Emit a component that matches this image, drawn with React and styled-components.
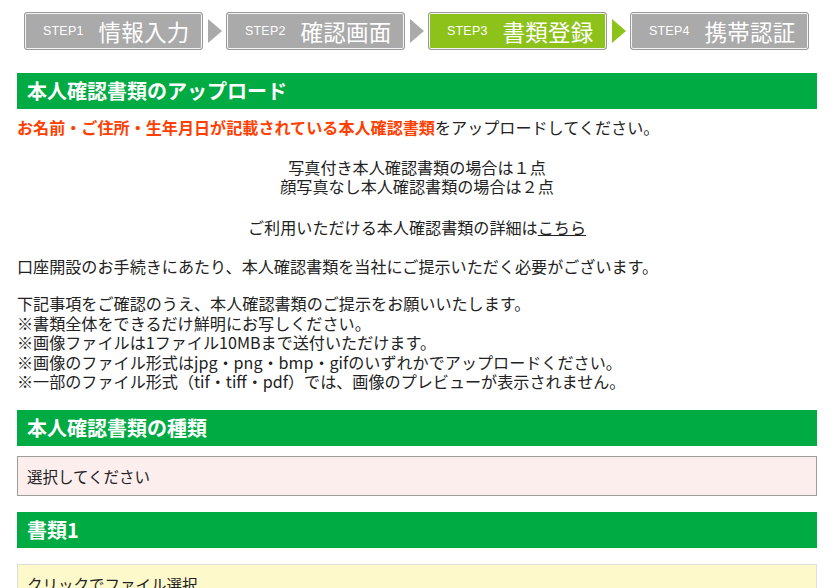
import styled, { createGlobalStyle } from "styled-components";

const GlobalStyle = createGlobalStyle`
    html, body {
        margin: 0;
        padding: 0;
        background: #fff;
    }
    body {
        font-family: "Noto Sans CJK JP", "Noto Sans", sans-serif;
        color: #222;
    }
`

const Page = styled.div`
    width: 800px;
    padding: 12px 17px 0;
`

const StepBar = styled.div`
    display: flex;
    align-items: center;
    padding-left: 7px;
    gap: 3.5px;
`

const StepBox = styled.div`
    width: 179px;
    height: 38px;
    flex: none;
    box-sizing: border-box;
    border: 1px solid #999;
    border-radius: 3px;
    box-shadow: inset 0 0 0 1px #f4f4f4;
    background: ${props => props.active ? "#8cc21a" : "#aaaaaa"};
    display: flex;
    align-items: center;
    padding-left: 18px;
    color: #fff;
    >small {
        font-family: "Liberation Sans", Arial, sans-serif;
        font-size: 12.5px;
        margin-right: 15px;
        letter-spacing: 0.2px;
    }
    >span {
        font-size: 22.5px;
        letter-spacing: 0.2px;
        line-height: 1;
    }
`

const Arrow = styled.div`
    width: 0;
    height: 0;
    flex: none;
    border-top: 12px solid transparent;
    border-bottom: 12px solid transparent;
    border-left: 14px solid ${props => props.active ? "#8cc21a" : "#aaaaaa"};
    margin: 0 1px;
`

const SectionTitle = styled.h2`
    margin: ${props => props.mt || 0}px 0 0;
    height: 36px;
    background: #00ab44;
    color: #fff;
    font-size: 20px;
    font-weight: bold;
    line-height: 36px;
    padding-left: 10px;
`

const Para = styled.p`
    margin: ${props => props.mt}px 0 0;
    font-size: 16.1px;
    line-height: 19.5px;
    text-align: ${props => props.center ? "center" : "left"};
`

const Red = styled.strong`
    color: #ff4000;
    font-weight: bold;
`

const Link = styled.a`
    color: #222;
    text-decoration: underline;
`

const SelectBox = styled.div`
    margin-top: 10px;
    height: 40px;
    box-sizing: border-box;
    border: 1px solid #a09a9a;
    background: #fdeeee;
    display: flex;
    align-items: center;
    padding-left: 9px;
    font-size: 15.5px;
`

const FileBox = styled.div`
    margin-top: 16px;
    height: 40px;
    box-sizing: border-box;
    border: 1px solid #ddd;
    background: #fef9cb;
    display: flex;
    align-items: center;
    padding-left: 9px;
    font-size: 15.5px;
`

const steps = [
    { no: "STEP1", label: "情報入力" },
    { no: "STEP2", label: "確認画面" },
    { no: "STEP3", label: "書類登録", active: true },
    { no: "STEP4", label: "携帯認証" },
]

const App = () => {
    return (
        <Page>
            <GlobalStyle />
            <StepBar>
                {steps.map((s, i) => (
                    <>
                        <StepBox key={s.no} active={s.active}>
                            <small>{s.no}</small>
                            <span>{s.label}</span>
                        </StepBox>
                        {i < steps.length - 1 && <Arrow active={s.active} />}
                    </>
                ))}
            </StepBar>

            <SectionTitle mt={23}>本人確認書類のアップロード</SectionTitle>
            <Para mt={9}>
                <Red>お名前・ご住所・生年月日が記載されている本人確認書類</Red>をアップロードしてください。
            </Para>
            <Para mt={20} center>
                写真付き本人確認書類の場合は１点<br />
                顔写真なし本人確認書類の場合は２点
            </Para>
            <Para mt={21} center>
                ご利用いただける本人確認書類の詳細は<Link href="#">こちら</Link>
            </Para>
            <Para mt={20}>
                口座開設のお手続きにあたり、本人確認書類を当社にご提示いただく必要がございます。
            </Para>
            <Para mt={17.5}>
                下記事項をご確認のうえ、本人確認書類のご提示をお願いいたします。<br />
                ※書類全体をできるだけ鮮明にお写しください。<br />
                ※画像ファイルは1ファイル10MBまで送付いただけます。<br />
                ※画像のファイル形式はjpg・png・bmp・gifのいずれかでアップロードください。<br />
                ※一部のファイル形式（tif・tiff・pdf）では、画像のプレビューが表示されません。
            </Para>

            <SectionTitle mt={18}>本人確認書類の種類</SectionTitle>
            <SelectBox>選択してください</SelectBox>

            <SectionTitle mt={16}>書類1</SectionTitle>
            <FileBox>クリックでファイル選択</FileBox>
        </Page>
    )
}

export default App
